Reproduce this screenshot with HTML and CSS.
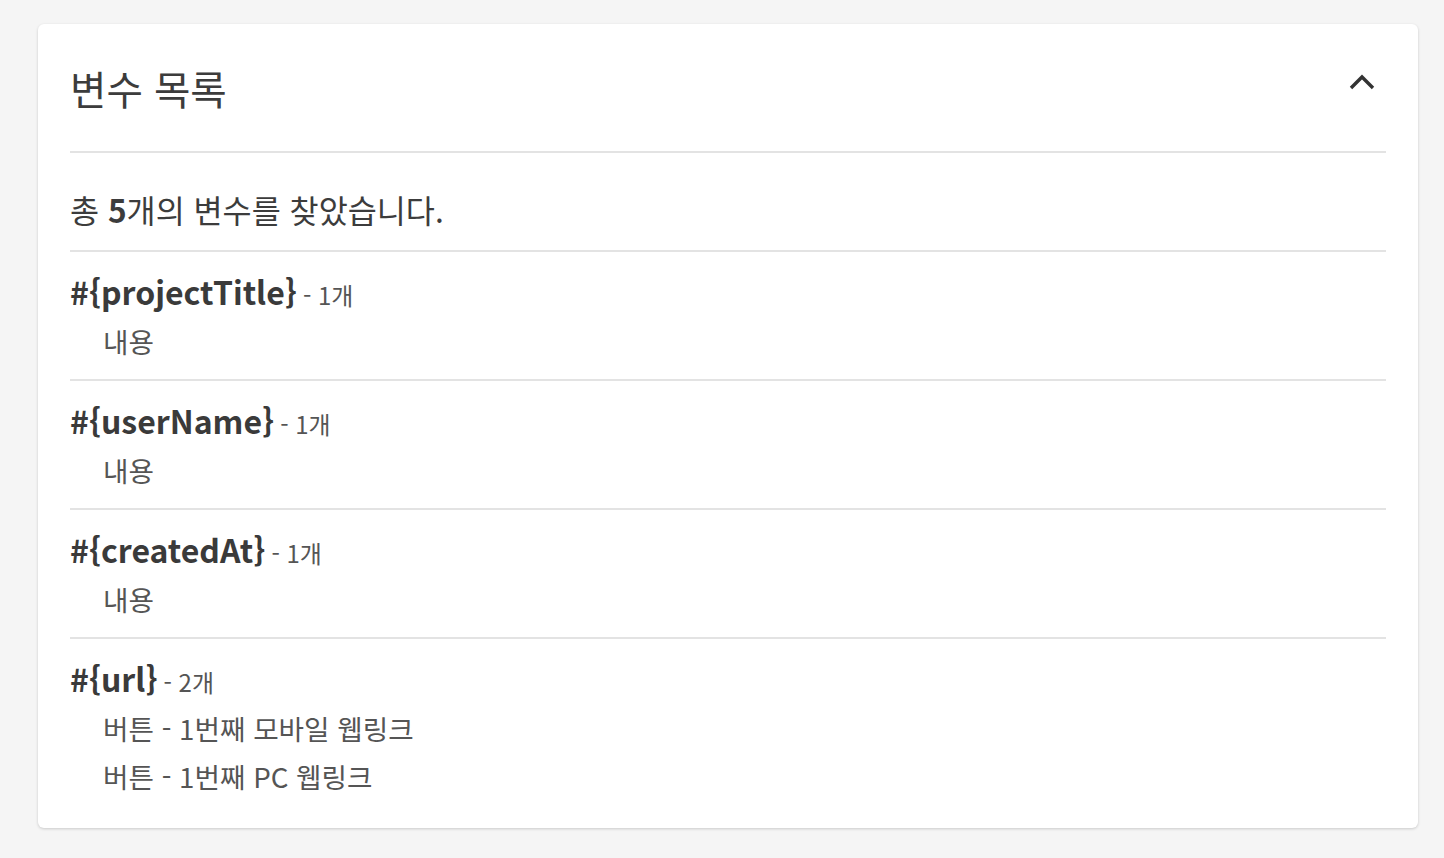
FILE: index.html
```html
<!DOCTYPE html>
<html lang="ko">
<head>
<meta charset="utf-8">
<title>변수 목록</title>
<link rel="stylesheet" href="styles.css">
</head>
<body>
<section class="card">
  <header class="card-header">
    <h2 class="card-title">변수 목록</h2>
    <button class="toggle" type="button" aria-label="접기">
      <svg width="28" height="20" viewBox="0 0 28 20"><polyline points="3,15 14,4 25,15" fill="none" stroke="#333" stroke-width="3.4"/></svg>
    </button>
  </header>
  <p class="summary">총 <strong>5</strong>개의 변수를 찾았습니다.</p>
  <ul class="var-list">
    <li class="var-item">
      <div class="var-name"><strong>#{projectTitle}</strong><span class="count">- 1개</span></div>
      <div class="var-use">내용</div>
    </li>
    <li class="var-item">
      <div class="var-name"><strong>#{userName}</strong><span class="count">- 1개</span></div>
      <div class="var-use">내용</div>
    </li>
    <li class="var-item">
      <div class="var-name"><strong>#{createdAt}</strong><span class="count">- 1개</span></div>
      <div class="var-use">내용</div>
    </li>
    <li class="var-item">
      <div class="var-name"><strong>#{url}</strong><span class="count">- 2개</span></div>
      <div class="var-use">버튼 - 1번째 모바일 웹링크</div>
      <div class="var-use">버튼 - 1번째 PC 웹링크</div>
    </li>
  </ul>
</section>
</body>
</html>
```

FILE: styles.css
```css
* { box-sizing: border-box; }
html, body { margin: 0; padding: 0; }
body {
  background: #f5f5f5;
  font-family: "Noto Sans CJK KR", "Noto Sans", sans-serif;
  color: #444;
  padding: 24px 26px 30px 38px;
}
.card {
  background: #fff;
  border-radius: 6px;
  box-shadow: 0 1px 3px rgba(0,0,0,0.18);
  padding: 0 32px 28px 32px;
}
.card-header {
  display: flex;
  align-items: center;
  justify-content: space-between;
  height: 129px;
  border-bottom: 2px solid #e3e3e3;
}
.card-title {
  margin: 0;
  font-size: 39.6px;
  font-weight: 400;
  color: #3c3c3c;
  line-height: 1;
  padding-top: 1px;
}
.toggle {
  border: 0;
  background: none;
  padding: 0;
  width: 28px;
  height: 20px;
  margin-right: 10px;
  margin-top: -10px;
  display: flex;
}
.toggle svg { display: block; }
.summary {
  margin: 0;
  font-size: 31.6px;
  line-height: 40px;
  height: 99px;
  padding: 36px 0 0;
  color: #3c3c3c;
  border-bottom: 2px solid #e3e3e3;
}
.summary strong { font-weight: 700; }
.var-list { list-style: none; margin: 0; padding: 0; }
.var-item {
  padding: 16px 0 14px;
  border-bottom: 2px solid #e3e3e3;
}
.var-item:last-child { border-bottom: 0; padding-bottom: 0; }
.var-name {
  display: flex;
  align-items: baseline;
  height: 46px;
  line-height: 46px;
  color: #3a3a3a;
  margin-bottom: 3px;
}
.var-name strong {
  font-size: 32px;
  font-weight: 700;
  line-height: 46px;
}
.count {
  font-size: 24px;
  line-height: 46px;
  color: #555;
  margin-left: 6px;
}
.var-use {
  font-size: 27.7px;
  line-height: 48px;
  color: #555;
  padding-left: 33px;
}
```
